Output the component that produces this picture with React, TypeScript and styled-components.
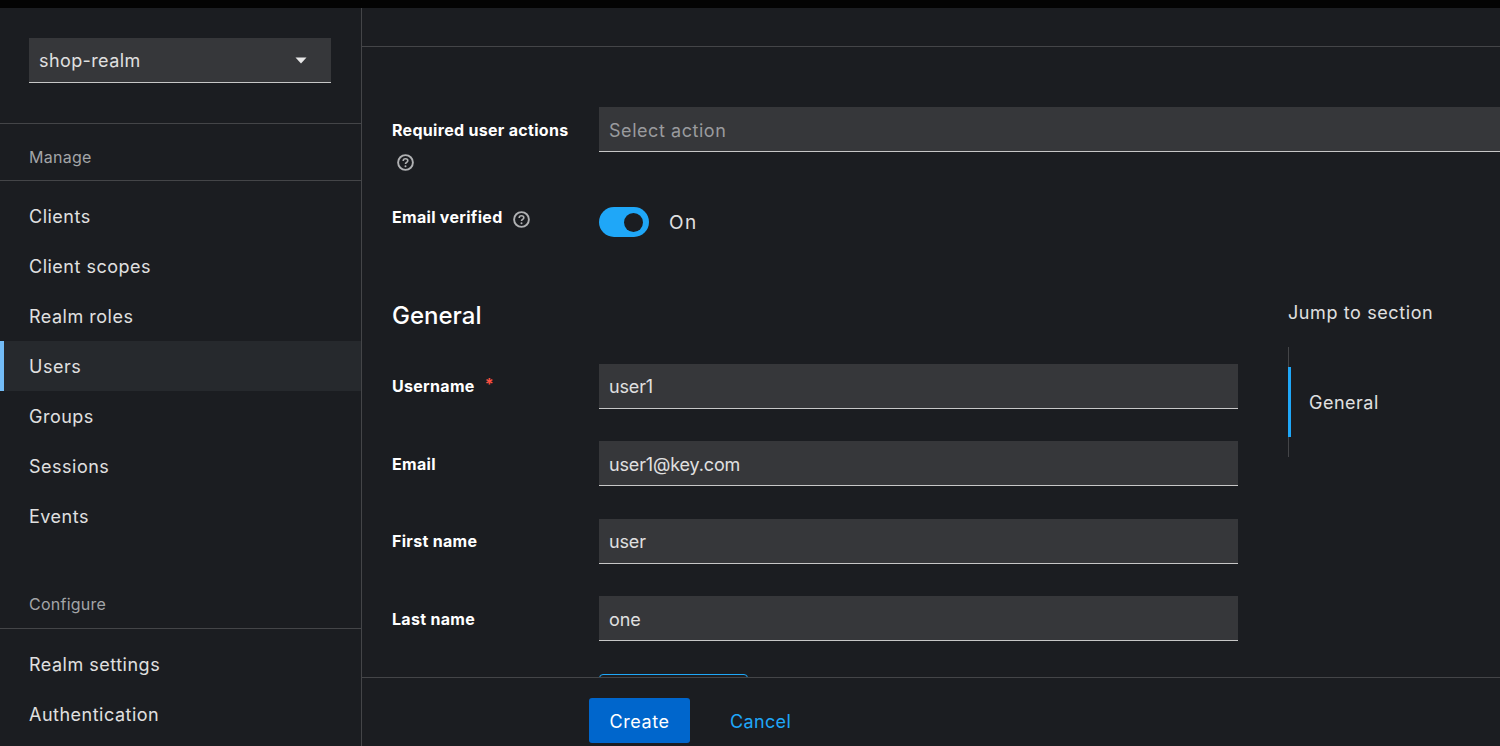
import styled, { createGlobalStyle } from 'styled-components'

const GlobalStyle = createGlobalStyle`
  html, body {
    margin: 0;
    padding: 0;
    height: 100%;
    overflow: hidden;
    background: #1b1d21;
  }
  * { box-sizing: border-box; }
  body {
    font-family: Inter, "Noto Sans", "Liberation Sans", sans-serif;
    color: #e0e0e0;
  }
`

const Page = styled.div`
  width: 1500px;
  height: 746px;
  display: flex;
  flex-direction: column;
  overflow: hidden;
  background: #1b1d21;
`
const TopStrip = styled.div`
  height: 8px;
  flex: none;
  background: #030303;
`
const Body = styled.div`
  flex: 1;
  display: flex;
  min-height: 0;
`

const Sidebar = styled.aside`
  width: 362px;
  flex: none;
  border-right: 1px solid #444548;
  overflow: hidden;
`
const RealmBox = styled.div`
  height: 116px;
  padding: 30px 30px 0 29px;
  border-bottom: 1px solid #444548;
`
const RealmSelect = styled.div`
  height: 45px;
  display: flex;
  align-items: center;
  justify-content: space-between;
  padding: 0 24px 0 10px;
  background: #36373a;
  border-bottom: 1px solid #c7c7c7;
  font-size: 18px;
  letter-spacing: 0.4px;
`
const GroupTitle = styled.div<{ $gap: number; $height: number }>`
  height: ${p => p.$height}px;
  margin-top: ${p => p.$gap}px;
  padding: 21px 0 0 29px;
  font-size: 16px;
  line-height: 24px;
  letter-spacing: 0.25px;
  color: #a3a5a8;
  border-bottom: 1px solid #444548;
`
const NavList = styled.nav`
  padding-top: 10px;
  display: flex;
  flex-direction: column;
`
const NavItem = styled.div<{ $active?: boolean }>`
  height: 50px;
  display: flex;
  align-items: center;
  padding-left: ${p => (p.$active ? 25 : 29)}px;
  font-size: 18px;
  letter-spacing: 0.5px;
  color: #e0e0e0;
  background: ${p => (p.$active ? '#26292d' : 'transparent')};
  border-left: ${p => (p.$active ? '4px solid #73bcf7' : 'none')};
`

const Main = styled.main`
  flex: 1;
  min-width: 0;
  display: flex;
  flex-direction: column;
`
const MainHeader = styled.div`
  height: 39px;
  flex: none;
  border-bottom: 1px solid #444548;
`
const Content = styled.div`
  flex: 1;
  min-height: 0;
  overflow: hidden;
  padding: 60px 0 0 30px;
`
const TopFields = styled.div`
  display: flex;
  flex-direction: column;
  width: 1200px;
`
const FieldRow = styled.div<{ $height: number }>`
  display: grid;
  grid-template-columns: 207px 1fr;
  height: ${p => p.$height}px;
`
const Label = styled.div<{ $top?: number }>`
  max-width: 190px;
  margin-top: ${p => p.$top ?? 0}px;
  font-size: 16px;
  font-weight: 700;
  line-height: 24px;
  letter-spacing: 0.3px;
  color: #fff;
  display: flex;
  flex-wrap: wrap;
  align-items: center;
  align-content: flex-start;
`
const HelpSvg = styled.svg<{ $left: number; $top: number }>`
  width: 17px;
  height: 17px;
  color: #b0b1b3;
  margin-left: ${p => p.$left}px;
  margin-top: ${p => p.$top}px;
`
const Field = styled.div<{ $muted?: boolean }>`
  height: 45px;
  display: flex;
  align-items: center;
  padding: 2px 0 0 10px;
  background: #36373a;
  border-bottom: 1px solid #c7c7c7;
  font-size: 18px;
  letter-spacing: ${p => (p.$muted ? '0.55px' : '-0.15px')};
  color: ${p => (p.$muted ? '#9a9b9e' : '#e0e0e0')};
`
const ToggleRow = styled.div`
  display: flex;
  align-items: center;
  gap: 20px;
  font-size: 19px;
  letter-spacing: 1.5px;
  color: #e0e0e0;
`
const ToggleTrack = styled.div`
  width: 50px;
  height: 30px;
  border-radius: 15px;
  background: #1fa7f8;
  display: flex;
  align-items: center;
  justify-content: flex-end;
  padding-right: 6px;
`
const ToggleKnob = styled.div`
  width: 19px;
  height: 19px;
  border-radius: 50%;
  background: #1b1d21;
`

const SectionArea = styled.div`
  display: flex;
  gap: 50px;
  margin-top: 62px;
`
const SectionForm = styled.section`
  width: 846px;
  flex: none;
`
const SectionTitle = styled.h2`
  margin: 0 0 31.75px;
  height: 33px;
  font-size: 24px;
  font-weight: 500;
  line-height: 33px;
  color: #fff;
`
const GeneralRow = styled.div`
  display: grid;
  grid-template-columns: 207px 1fr;
  align-items: center;
  height: 45px;
  margin-bottom: 32.5px;
`
const Required = styled.span`
  color: #fe5142;
  margin-left: 10px;
  position: relative;
  top: -2px;
`
const OutlineButton = styled.div`
  margin: 32px 0 0 207px;
  width: 149px;
  height: 45px;
  border: 1px solid #1fa7f8;
  border-radius: 4px;
`

const JumpNav = styled.div`
  width: 200px;
  flex: none;
`
const JumpTitle = styled.div`
  height: 24px;
  margin: 2px 0 22px;
  font-size: 18px;
  line-height: 24px;
  letter-spacing: 0.6px;
  color: #e0e0e0;
`
const JumpRail = styled.div`
  height: 110px;
  padding: 20px 0;
  border-left: 1px solid #444548;
`
const JumpLink = styled.div`
  height: 70px;
  margin-left: -1px;
  display: flex;
  align-items: center;
  padding-left: 18px;
  border-left: 3px solid #1fa7f8;
  font-size: 18px;
  letter-spacing: 0.5px;
  color: #e0e0e0;
`

const Footer = styled.footer`
  height: 69px;
  flex: none;
  display: flex;
  align-items: flex-start;
  gap: 20px;
  padding: 20px 0 0 227px;
  border-top: 1px solid #444548;
  background: #1b1d21;
  position: relative;
`
const PrimaryButton = styled.button`
  width: 101px;
  height: 45px;
  padding: 2px 0 0;
  border: none;
  border-radius: 3px;
  background: #0066cc;
  color: #fff;
  font: inherit;
  font-size: 18px;
  letter-spacing: 0.6px;
`
const LinkButton = styled.button`
  height: 45px;
  padding: 2px 20px 0;
  border: none;
  background: none;
  color: #1fa7f8;
  font: inherit;
  font-size: 18px;
  letter-spacing: 0.35px;
`

const HelpIcon = ({ left, top }: { left: number; top: number }) => (
  <HelpSvg $left={left} $top={top} viewBox="0 0 17 17" fill="none" stroke="currentColor">
    <circle cx="8.5" cy="8.5" r="7.4" strokeWidth="1.9" />
    <path d="M6.2 6.9c0-1.4 1-2.2 2.3-2.2s2.3.8 2.3 2c0 1.7-2.3 1.7-2.3 3.3" strokeWidth="1.6" />
    <circle cx="8.5" cy="12.3" r="1" fill="currentColor" stroke="none" />
  </HelpSvg>
)

const manageItems = ['Clients', 'Client scopes', 'Realm roles', 'Users', 'Groups', 'Sessions', 'Events']
const configureItems = ['Realm settings', 'Authentication']
const generalFields = [
  { label: 'Username', value: 'user1', required: true },
  { label: 'Email', value: 'user1@key.com' },
  { label: 'First name', value: 'user' },
  { label: 'Last name', value: 'one' },
]

export default function App() {
  return (
    <Page>
      <GlobalStyle />
      <TopStrip />
      <Body>
        <Sidebar>
          <RealmBox>
            <RealmSelect>
              shop-realm
              <svg width="12" height="7" viewBox="0 0 12 7">
                <path d="M0.5 0.5h11L6 6.5z" fill="#e8e8e8" />
              </svg>
            </RealmSelect>
          </RealmBox>
          <GroupTitle $gap={0} $height={57}>Manage</GroupTitle>
          <NavList>
            {manageItems.map(item => (
              <NavItem key={item} $active={item === 'Users'}>{item}</NavItem>
            ))}
          </NavList>
          <GroupTitle $gap={30} $height={58}>Configure</GroupTitle>
          <NavList>
            {configureItems.map(item => (
              <NavItem key={item}>{item}</NavItem>
            ))}
          </NavList>
        </Sidebar>
        <Main>
          <MainHeader />
          <Content>
            <TopFields>
              <FieldRow $height={100}>
                <Label $top={11}>
                  Required user actions
                  <HelpIcon left={5} top={12} />
                </Label>
                <Field $muted>Select action</Field>
              </FieldRow>
              <FieldRow $height={30}>
                <Label $top={-2}>
                  Email verified
                  <HelpIcon left={10} top={4} />
                </Label>
                <ToggleRow>
                  <ToggleTrack><ToggleKnob /></ToggleTrack>
                  On
                </ToggleRow>
              </FieldRow>
            </TopFields>
            <SectionArea>
              <SectionForm>
                <SectionTitle>General</SectionTitle>
                {generalFields.map(f => (
                  <GeneralRow key={f.label}>
                    <Label>
                      {f.label}
                      {f.required && <Required>*</Required>}
                    </Label>
                    <Field>{f.value}</Field>
                  </GeneralRow>
                ))}
                <OutlineButton />
              </SectionForm>
              <JumpNav>
                <JumpTitle>Jump to section</JumpTitle>
                <JumpRail>
                  <JumpLink>General</JumpLink>
                </JumpRail>
              </JumpNav>
            </SectionArea>
          </Content>
          <Footer>
            <PrimaryButton>Create</PrimaryButton>
            <LinkButton>Cancel</LinkButton>
          </Footer>
        </Main>
      </Body>
    </Page>
  )
}
